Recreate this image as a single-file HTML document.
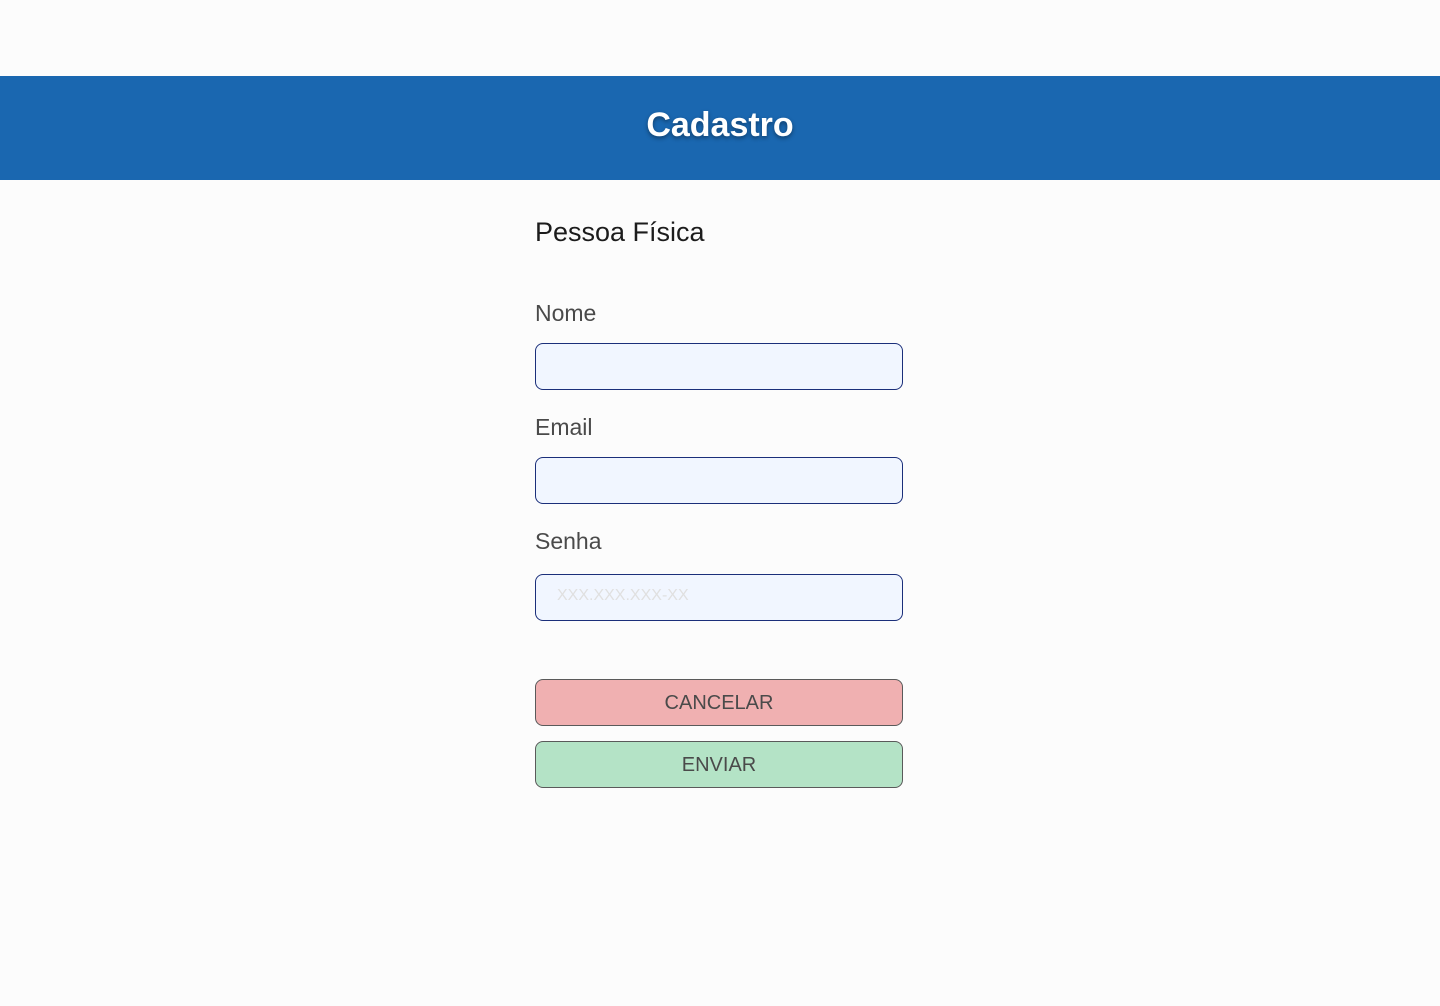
<!DOCTYPE html>
<html><head><meta charset="utf-8"><style>
body{margin:0;background:#fcfcfc;font-family:"Liberation Sans",sans-serif;width:1440px;height:1006px;position:relative;overflow:hidden}
.hdr{position:absolute;top:76px;left:0;width:1440px;height:104px;background:#1a67b0;color:#fff;font-size:34px;font-weight:bold;text-align:center;line-height:98px;text-shadow:0 2px 4px rgba(0,0,0,.4)}
.t{position:absolute;left:535px;top:217px;font-size:27px;color:#1c1c1c}
.l{position:absolute;left:535px;font-size:23px;color:#4a4a4a}
.i{position:absolute;left:535px;width:368px;height:47px;box-sizing:border-box;border:1.5px solid #1b2f7a;border-radius:8px;background:#f1f6ff}
.b{position:absolute;left:535px;width:368px;height:47px;box-sizing:border-box;border:1.5px solid #5a5a5a;border-radius:8px;text-align:center;line-height:46px;font-size:20px;color:#4a4a4a}
</style></head><body>
<div class="hdr">Cadastro</div>
<div class="t">Pessoa Física</div>
<div class="l" style="top:300px">Nome</div>
<div class="i" style="top:343px"></div>
<div class="l" style="top:414px">Email</div>
<div class="i" style="top:457px"></div>
<div class="l" style="top:528px">Senha</div>
<div class="i" style="top:574px"><span style="position:absolute;left:21px;top:12px;font-size:16px;color:#e0e0e0">XXX.XXX.XXX-XX</span></div>
<div class="b" style="top:679px;background:#f0b0b1">CANCELAR</div>
<div class="b" style="top:741px;background:#b4e3c6">ENVIAR</div>
</body></html>
